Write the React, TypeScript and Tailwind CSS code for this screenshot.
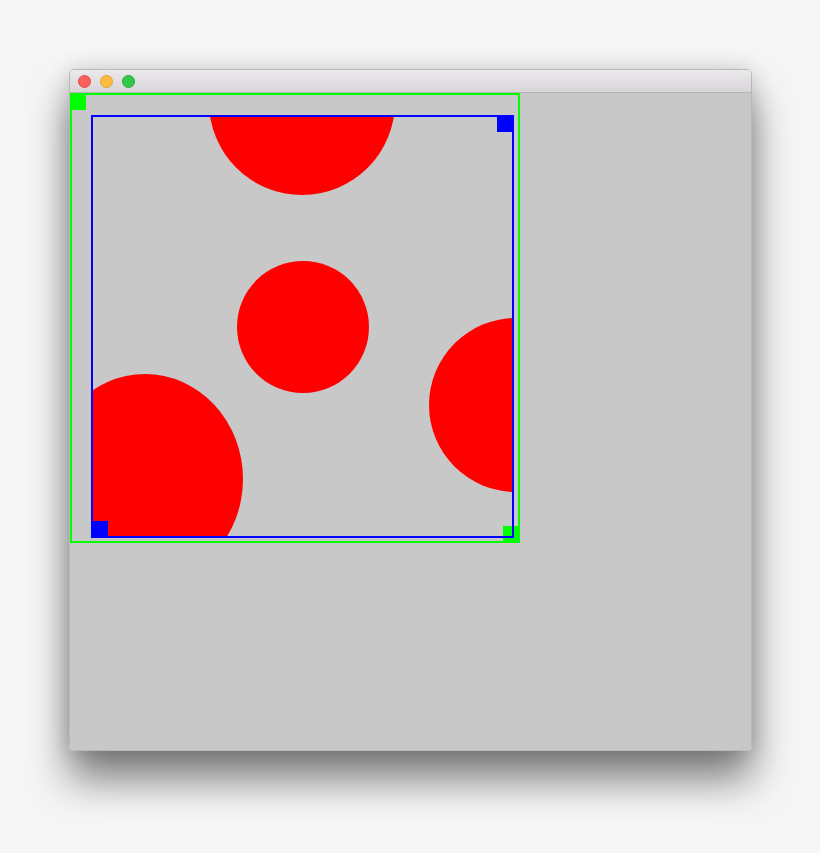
import React from 'react';

const LIGHTS = [
  { id: 'close', fill: 'bg-[#fc605c]', ring: 'border-[#de4a45]' },
  { id: 'min', fill: 'bg-[#fdbc40]', ring: 'border-[#dea236]' },
  { id: 'max', fill: 'bg-[#34c84a]', ring: 'border-[#27aa35]' },
];

// the test drawing: red blobs clipped to the blue frame, marker squares at the corners
function Leinwand() {
  return (
    <svg width="451" height="451" viewBox="0 0 451 451" className="block">
      <defs>
        <clipPath id="innen">
          <rect x="22" y="23" width="421" height="421" />
        </clipPath>
      </defs>
      <g clipPath="url(#innen)" fill="#ff0000">
        <circle cx="232" cy="9" r="93" />
        <circle cx="233" cy="234" r="66" />
        <circle cx="446" cy="312" r="87" />
        <ellipse cx="75" cy="386" rx="98" ry="105" />
      </g>
      <rect x="1" y="1" width="448" height="448" fill="none" stroke="#00ff00" strokeWidth="2" />
      <rect x="0" y="1" width="16" height="16" fill="#00ff00" />
      <rect x="433" y="433" width="17" height="17" fill="#00ff00" />
      <rect x="22" y="23" width="421" height="421" fill="none" stroke="#0000ff" strokeWidth="2" />
      <rect x="427" y="22" width="17" height="17" fill="#0000ff" />
      <rect x="21" y="428" width="17" height="17" fill="#0000ff" />
    </svg>
  );
}

export default function App() {
  return (
    <div className="w-full h-[853px] bg-[#f6f6f6] pt-[69px] pl-[69px] overflow-hidden">
      <div className="w-[683px] h-[682px] flex flex-col rounded-[5px] border border-[#b9b9b9] overflow-hidden shadow-[0_28px_42px_rgba(0,0,0,0.5),0_0_22px_rgba(0,0,0,0.14)]">
        <div className="h-[23px] shrink-0 flex items-center gap-[9px] pl-[8px] border-b border-[#b4b4b4] bg-gradient-to-b from-[#ebe9eb] to-[#d7d5d7]">
          {LIGHTS.map((l) => (
            <span key={l.id} className={`w-[13px] h-[13px] rounded-full border ${l.fill} ${l.ring}`} />
          ))}
        </div>
        <div className="flex-1 bg-[#c8c8c8]">
          <Leinwand />
        </div>
      </div>
    </div>
  );
}
